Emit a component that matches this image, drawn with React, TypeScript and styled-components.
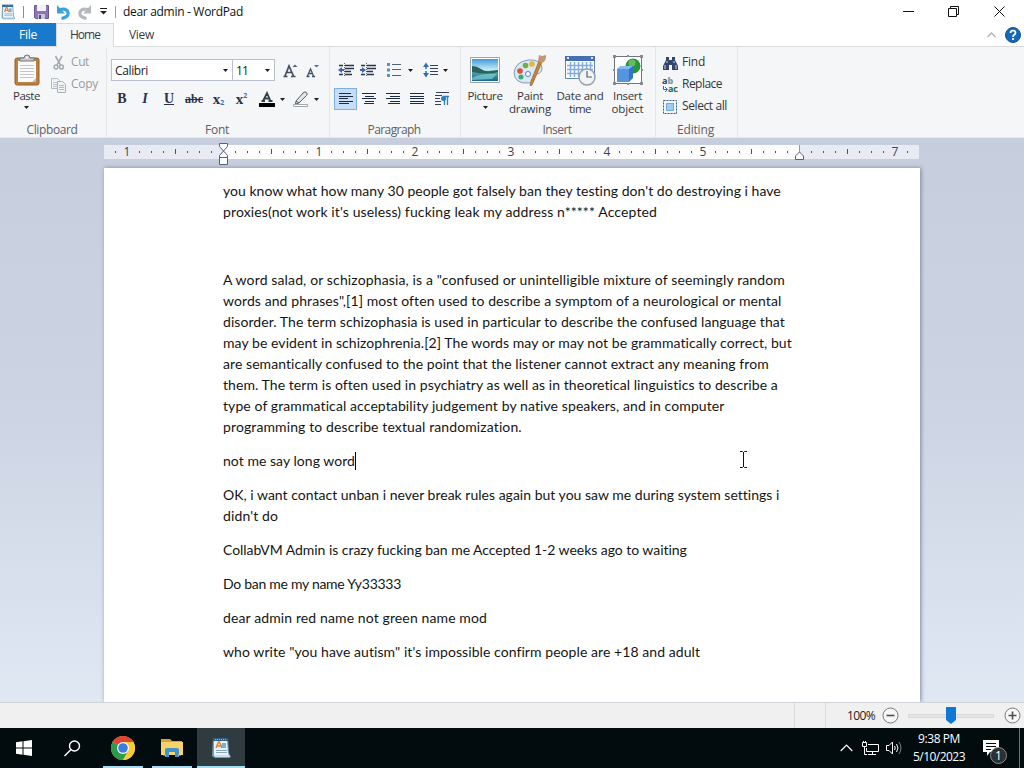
import * as React from 'react';
import styled, { createGlobalStyle } from 'styled-components';

const GlobalStyle = createGlobalStyle`
  * { box-sizing: border-box; }
  body {
    margin: 0;
    overflow: hidden;
    font-family: "Open Sans", "Noto Sans", sans-serif;
    font-size: 12px;
  }
  svg { display: block; flex: none; }
`;

const Window = styled.div`
  width: 1024px;
  height: 768px;
  display: flex;
  flex-direction: column;
  background: #fff;
  overflow: hidden;
`;

const FitSpan = styled.span`
  display: inline-block;
  white-space: pre;
  flex: none;
`;

interface FitProps {
  w: number;
  children: string;
}

// spreads the letters so that the text takes exactly w pixels
function Fit({ w, children }: FitProps) {
  const ref = React.useRef<HTMLSpanElement>(null);
  const [spacing, setSpacing] = React.useState(0);
  React.useLayoutEffect(() => {
    if (ref.current) {
      setSpacing((w - ref.current.getBoundingClientRect().width) / children.length);
    }
  }, []);
  return <FitSpan ref={ref} style={{ letterSpacing: spacing }}>{children}</FitSpan>;
}

/* title bar */

const TitleBar = styled.header`
  height: 23px;
  flex: none;
  display: flex;
  align-items: center;
  color: #111;
`;

const Slot = styled.div<{ w: number; h?: number }>`
  width: ${p => p.w}px;
  height: ${p => (p.h ? p.h + 'px' : 'auto')};
  flex: none;
  display: flex;
  align-items: center;
  justify-content: center;
`;

const Spacer = styled.div`
  flex: 1;
`;

/* tabs */

const Tabs = styled.nav`
  height: 24px;
  flex: none;
  display: flex;
  border-bottom: 1px solid #dadbdc;
`;

const Tab = styled.div<{ w: number; kind?: 'file' | 'active' }>`
  width: ${p => p.w}px;
  height: ${p => (p.kind === 'active' ? 24 : 23)}px;
  display: flex;
  align-items: center;
  justify-content: center;
  padding-bottom: ${p => (p.kind === 'active' ? 2 : 0)}px;
  color: ${p => (p.kind === 'file' ? '#fff' : '#3c3c46')};
  background: ${p => (p.kind === 'file' ? '#1979ca' : p.kind === 'active' ? '#f5f6f7' : 'none')};
  border: ${p => (p.kind === 'active' ? '1px solid #dadbdc' : 'none')};
  border-bottom: none;
`;

/* ribbon */

const Ribbon = styled.div`
  height: 91px;
  flex: none;
  display: flex;
  background: #f5f6f7;
  border-bottom: 1px solid #dfe8f4;
`;

const Group = styled.section<{ w: number }>`
  width: ${p => p.w}px;
  height: 90px;
  padding-top: 5px;
  display: flex;
  flex-direction: column;
  position: relative;
  border-right: 1px solid #e4e6ea;
`;

const GroupBody = styled.div<{ left?: number }>`
  height: 70px;
  padding-left: ${p => p.left || 0}px;
  display: flex;
`;

const Caption = styled.div`
  height: 15px;
  line-height: 15px;
  text-align: center;
  padding-right: 2px;
  color: #5d6068;
`;

const Rows = styled.div<{ top?: number }>`
  display: flex;
  flex-direction: column;
  padding-top: ${p => p.top || 0}px;
`;

const Row = styled.div<{ h: number }>`
  height: ${p => p.h}px;
  display: flex;
  align-items: center;
`;

const BigButton = styled.div<{ w: number }>`
  width: ${p => p.w}px;
  display: flex;
  flex-direction: column;
  align-items: center;
  color: #33363e;
  font-size: 11.5px;
  line-height: 13px;
`;

const BigIcon = styled.div`
  height: 37px;
  padding-bottom: 1px;
  display: flex;
  align-items: center;
`;

const SmallLabel = styled.span<{ off?: boolean }>`
  color: ${p => (p.off ? '#9a9ca0' : '#33363e')};
  padding: 0 0 2px 2px;
  line-height: 18px;
`;

const Combo = styled.div<{ w: number }>`
  width: ${p => p.w}px;
  height: 22px;
  margin-right: -1px;
  padding: 0 4px 0 3px;
  display: flex;
  align-items: center;
  justify-content: space-between;
  background: #fff;
  border: 1px solid #b9bfce;
  color: #222;
`;

const Glyph = styled.span<{ size: number; italic?: boolean; line?: string }>`
  font-family: "Liberation Serif", serif;
  font-size: ${p => p.size}px;
  font-weight: 700;
  font-style: ${p => (p.italic ? 'italic' : 'normal')};
  text-decoration: ${p => p.line || 'none'};
  color: #28324a;
  line-height: 16px;
`;

const Script = styled.span<{ up?: boolean }>`
  font-size: 7px;
  font-weight: 700;
  color: #3572b8;
  line-height: 8px;
  margin-top: ${p => (p.up ? -7 : 8)}px;
`;

const Pressed = styled.div`
  width: 23px;
  height: 22px;
  display: flex;
  align-items: center;
  justify-content: center;
  background: #c6def5;
  border: 1px solid #7fb0df;
`;

/* work area */

const Workspace = styled.main`
  height: 564px;
  flex: none;
  display: flex;
  flex-direction: column;
  padding-left: 104px;
  padding-top: 7px;
  background: linear-gradient(#c6cddd, #cdd5e4 50%, #dfe8f3);
  overflow: hidden;
`;

const Ruler = styled.div`
  width: 815px;
  height: 14px;
  flex: none;
  margin-bottom: 9px;
  padding-left: 5px;
  display: flex;
  position: relative;
  background: linear-gradient(90deg, #e8ebf4 119px, #fdfdfe 119px, #fdfdfe 695px, #e8ebf4 695px);
`;

const Tick = styled.div<{ kind: 'dot' | 'half' | 'num' | 'none' }>`
  width: 12px;
  height: 13px;
  flex: none;
  display: flex;
  align-items: center;
  justify-content: center;
  color: #3e4356;
  &::after {
    content: '';
    display: ${p => (p.kind === 'dot' || p.kind === 'half' ? 'block' : 'none')};
    width: 1px;
    height: ${p => (p.kind === 'half' ? 5 : 2)}px;
    background: #4c5060;
  }
`;

const Marker = styled.div<{ x: number; y: number }>`
  position: absolute;
  left: ${p => p.x}px;
  top: ${p => p.y}px;
`;

const Page = styled.article`
  width: 816px;
  height: 534px;
  flex: none;
  padding: 12px 0 0 119px;
  background: #fff;
  box-shadow: 1px 0 4px #7e8798;
  color: #151515;
  font-family: Lato, Carlito, sans-serif;
  font-size: 14px;
`;

const Paragraph = styled.div`
  min-height: 21px;
  margin-bottom: 13px;
`;

const Line = styled.div`
  height: 21px;
  line-height: 21px;
  display: flex;
`;

const Caret = styled.i`
  width: 1px;
  height: 18px;
  margin-top: 2px;
  background: #000;
`;

const MousePointer = styled.div`
  position: absolute;
  left: 739px;
  top: 451px;
`;

/* status bar */

const StatusBar = styled.footer`
  height: 26px;
  flex: none;
  display: flex;
  align-items: center;
  background: #f0f0f0;
  border-top: 1px solid #cfd2d6;
  color: #222;
`;

const StatusCell = styled.div<{ w: number }>`
  width: ${p => p.w}px;
  height: 25px;
  border-right: 1px solid #dcdcdc;
`;

const ZoomTrack = styled.div`
  width: 86px;
  height: 4px;
  margin: 0 10px 0 9px;
  display: flex;
  align-items: center;
  justify-content: center;
  background: #e4e5e6;
  border: 1px solid #d8d9da;
`;

/* taskbar */

const Taskbar = styled.div`
  height: 40px;
  flex: none;
  display: flex;
  background: #020b0d;
  color: #fff;
`;

const TaskButton = styled.div<{ w: number; active?: boolean; line?: number }>`
  width: ${p => p.w}px;
  height: 40px;
  display: flex;
  align-items: center;
  justify-content: center;
  background-color: ${p => (p.active ? '#303b3f' : 'transparent')};
  background-image: ${p => (p.line ? 'linear-gradient(#a3dcf3, #a3dcf3)' : 'none')};
  background-size: ${p => p.line || 0}px 2px;
  background-position: bottom center;
  background-repeat: no-repeat;
`;

const Clock = styled.div`
  width: 66px;
  display: flex;
  flex-direction: column;
  align-items: center;
  padding-top: 2px;
  line-height: 18px;
`;

const ShowDesktop = styled.div`
  width: 5px;
  border-left: 1px solid #6b7375;
`;

const Badge = styled.div`
  position: absolute;
  left: 7px;
  top: 7px;
  width: 17px;
  height: 17px;
  border-radius: 9px;
  border: 1px solid #8a8f90;
  background: #2b3032;
  font-size: 12px;
  line-height: 15px;
  text-align: center;
`;

const Notify = styled.div`
  position: relative;
  width: 18px;
  height: 17px;
`;

/* drawings */

const Arrow = () => (
  <svg width="5" height="3"><path d="M0 0h5L2.500 3z" fill="#1c1c1c" /></svg>
);

const DocIcon = ({ size }: { size: number }) => (
  <svg width={size} height={size} viewBox="0 0 22 22">
    <path d="M3 1h15l1 15 2 4-2 1H5l-3-2z" fill="#6f9fbd" />
    <path d="M3 1h15v3H3z" fill="#315f86" />
    <path d="M4 4h13l1 12 1 3H4z" fill="#e9f3fa" />
    <path d="M5 2.500h11" stroke="#7dbde4" strokeDasharray="1 1" />
    <path d="M6 11l2.500-6h1l2.500 6M7 9h4" fill="none" stroke="#e1803c" strokeWidth="1.500" />
    <path d="M12 6h4v5h-4z" fill="#78b1d8" />
    <path d="M6 13.500h11M6 15.500h11" stroke="#8da8bd" />
    <path d="M4 18h15l1 2H5z" fill="#c8e0ef" />
  </svg>
);

const SaveIcon = () => (
  <svg width="15" height="15" viewBox="0 0 15 15">
    <path d="M.500 1.500h14v13H2l-1.500-1z" fill="#8d74b5" stroke="#6a5795" />
    <path d="M3 1h9v6H3z" fill="#f3f1f8" />
    <path d="M4 10h7v5H4z" fill="#c9c3dd" />
    <path d="M5 11h2v4H5z" fill="#514374" />
  </svg>
);

const UndoIcon = ({ redo }: { redo?: boolean }) => (
  <svg width="15" height="16" viewBox="0 0 15 16">
    <g transform={redo ? 'matrix(-1 0 0 1 15 0)' : undefined}>
      <path
        d="M5.500 14.500q7.500-1.500 6.500-6Q11 4 4 5.500"
        fill="none"
        stroke={redo ? '#b5b9be' : '#3ba3da'}
        strokeWidth="3.200"
      />
      <path d="M1 1v8.500h8z" fill={redo ? '#b5b9be' : '#3ba3da'} />
    </g>
  </svg>
);

const PasteIcon = () => (
  <svg width="26" height="32" viewBox="0 0 26 32">
    <rect x="1" y="4" width="24" height="27" rx="2" fill="#b98142" stroke="#936330" />
    <path d="M4 7h18v21H4z" fill="#fbfbfb" />
    <path d="M6 11.500h14M6 14.500h14M6 17.500h14M6 20.500h14M6 23.500h14" stroke="#c2c6cc" />
    <path d="M18 28l4-4v4z" fill="#b9bec8" />
    <path d="M6 7V4h4q0-3 3-3t3 3h4v3z" fill="#c7cacc" stroke="#74787c" />
    <circle cx="13" cy="3.500" r="1" fill="#fff" />
  </svg>
);

const CutIcon = () => (
  <svg width="12" height="16" viewBox="0 0 12 16">
    <path d="M2.500 1l5 9M9 1L4 10" stroke="#a5abb3" strokeWidth="1.600" />
    <circle cx="3" cy="12" r="1.900" fill="none" stroke="#a5abb3" strokeWidth="1.500" />
    <circle cx="8.500" cy="12" r="1.900" fill="none" stroke="#a5abb3" strokeWidth="1.500" />
  </svg>
);

const CopyIcon = () => (
  <svg width="16" height="16" viewBox="0 0 16 16">
    <path d="M.500 1.500h6l2 2v8h-8z" fill="#f3f4f6" stroke="#b4bac3" />
    <path d="M2 5.500h4M2 7.500h4M2 9.500h4" stroke="#bcc3cd" />
    <path d="M6.500 4.500h5l3 3v8h-8z" fill="#f3f4f6" stroke="#a8afb9" />
    <path d="M8 8.500h5M8 10.500h5M8 12.500h5" stroke="#b0b8c4" />
  </svg>
);

const GrowIcon = ({ down }: { down?: boolean }) => (
  <svg width="15" height="15" viewBox="0 0 15 15">
    {down ? (
      <>
        <path d="M2.500 13l3-7 3 7M3.500 10.500h4M1.500 13.500h3M7 13.500h3" fill="none" stroke="#42556b" strokeWidth="1.300" />
        <path d="M9 2h5l-2.500 2.500z" fill="#3e70c0" />
      </>
    ) : (
      <>
        <path d="M2 13L6 3l4.500 10M3.500 9.500h5.500M.500 13.500h4M8 13.500h4.500" fill="none" stroke="#42505f" strokeWidth="1.700" />
        <path d="M9.500 4h5L12 1.500z" fill="#52617a" />
      </>
    )}
  </svg>
);

const PenIcon = () => (
  <svg width="17" height="17" viewBox="0 0 17 17">
    <path d="M4 10l7-8q2-2 3.500-.500t0 3L7 12l-3.500 1z" fill="#e3e5e7" stroke="#59606a" />
    <path d="M4 10l3 2" stroke="#59606a" />
    <path d="M1.500 13.500h14v2h-14z" fill="#fff" stroke="#a4a8ad" />
  </svg>
);

const FontColorIcon = () => (
  <svg width="16" height="16" viewBox="0 0 16 16">
    <path d="M4 10l4-8 3.500 8M5 7.500h5.500M2.500 10h3.500M9.500 10h4" fill="none" stroke="#35414f" strokeWidth="1.800" />
    <path d="M0 12h16v4H0z" fill="#000" />
  </svg>
);

const IndentIcon = ({ out }: { out?: boolean }) => (
  <svg width="16" height="14" viewBox="0 0 16 14">
    <path d="M1 2.500h4M7 2.500h9M7 5.500h9M7 8.500h6M1 11.500h4M7 11.500h7" stroke="#27364c" strokeWidth="1.500" />
    <path d="M6.500 0v14" stroke="#50607a" strokeDasharray="1 1" />
    <path d={out ? 'M0 7l4-3v2h2v2H4v2z' : 'M6 7L2 4v2H0v2h2v2z'} fill="#3d62b8" />
  </svg>
);

const BulletsIcon = () => (
  <svg width="15" height="14" viewBox="0 0 15 14">
    <path d="M0 0h3v3H0zM0 5.500h3v3H0zM0 11h3v3H0z" fill="#5c8fca" />
    <path d="M5 1.500h9M5 6.500h9M5 12.500h9" stroke="#52627c" />
  </svg>
);

const SpacingIcon = () => (
  <svg width="16" height="16" viewBox="0 0 16 16">
    <path d="M0 5l3-4.500L6 5zM0 11l3 4.500L6 11z" fill="#2f6fb5" />
    <path d="M3 4v3M3 9v3" stroke="#2f6fb5" strokeWidth="1.500" />
    <path d="M7 3.500h8M7 6.500h8M7 9.500h8M7 12.500h8" stroke="#33415a" />
  </svg>
);

const alignPaths = {
  left: 'M0 .500h12M0 3.500h14M0 5.500h9M0 8.500h14M0 10.500h10',
  center: 'M0 .500h14M3 3.500h9M0 5.500h14M3 8.500h9M2 10.500h10',
  right: 'M0 .500h14M4 3.500h10M0 5.500h14M4 8.500h10M2 10.500h12',
  justify: 'M0 .500h14M0 3.500h14M0 5.500h14M0 8.500h14M0 10.500h14',
};

const AlignIcon = ({ kind }: { kind: keyof typeof alignPaths }) => (
  <svg width="14" height="12"><path d={alignPaths[kind]} stroke="#1f2b44" /></svg>
);

const PilcrowIcon = () => (
  <svg width="14" height="14" viewBox="0 0 14 14">
    <path d="M1 .500h13M0 3.500h7M0 6.500h5M0 9.500h6M0 12.500h6" stroke="#33415a" />
    <path d="M8 4.500h6M9.500 13V4M12.500 13V4" stroke="#2a7fc0" strokeWidth="1.300" />
    <circle cx="8.500" cy="6.500" r="2.500" fill="#2a7fc0" />
  </svg>
);

const PictureIcon = () => (
  <svg width="30" height="26" viewBox="0 0 30 26">
    <defs>
      <linearGradient id="sky" x2="0" y2="1">
        <stop offset="0" stopColor="#3f9bdc" />
        <stop offset=".5" stopColor="#c9ecf5" />
        <stop offset=".6" stopColor="#49a3ac" />
        <stop offset="1" stopColor="#1d6790" />
      </linearGradient>
    </defs>
    <path d="M.500.500h29v25H.500z" fill="#fff" stroke="#9aa5b0" />
    <path d="M2 2h26v22H2z" fill="url(#sky)" />
    <path d="M2 9q5 0 9 3t9 2l8-1v2q-10 3-26 0z" fill="#286259" />
    <path d="M2 21q10-5 25-4l-5 5-20 1z" fill="#8fdcda" opacity=".6" />
  </svg>
);

const PaintIcon = () => (
  <svg width="34" height="32" viewBox="0 0 34 32">
    <path d="M1 19Q2 8 15 6q13-1 14 8 0 5-5 6-5 1-3 5 0 4-6 4Q2 30 1 19z" fill="#d9e8f4" stroke="#849cb3" />
    <circle cx="7" cy="17" r="2.800" fill="#d5533d" />
    <circle cx="12.500" cy="11.500" r="2.800" fill="#6fb13b" />
    <circle cx="19" cy="10" r="2.800" fill="#e6b733" />
    <circle cx="8" cy="23" r="2.500" fill="#42a374" />
    <circle cx="15" cy="20" r="2.500" fill="#fff" stroke="#4b7fc2" />
    <path d="M29 8L19 31l-2 1 1-5L26 7z" fill="#c8843e" stroke="#99602a" strokeWidth=".7" />
    <path d="M25 7l1-6 3 1 4-1q1 5-4 8z" fill="#bf9874" />
  </svg>
);

const CalendarIcon = () => (
  <svg width="32" height="32" viewBox="0 0 32 32">
    <path d="M1.500 2.500h29v22h-29z" fill="#fff" stroke="#5d86bd" />
    <path d="M1 2h30v5H1z" fill="#456fae" />
    <path d="M4 3v2M28 3v2" stroke="#dbe8f5" strokeWidth="2" />
    <path d="M3 11.500h26M3 15.500h26M3 19.500h26M6.500 8v15M10.500 8v15M14.500 8v15M18.500 8v15M22.500 8v15M26.500 8v15" stroke="#85ace0" strokeWidth="1.500" />
    <circle cx="23" cy="23" r="8" fill="#f1f4f6" stroke="#989fa8" strokeWidth="1.500" />
    <path d="M23 17v6h5" fill="none" stroke="#59616b" strokeWidth="1.200" />
  </svg>
);

const ObjectIcon = () => (
  <svg width="30" height="30" viewBox="0 0 30 30">
    <path d="M1.500 1.500h27v27h-27z" fill="#fff" stroke="#71757b" />
    <path d="M0 0h3v3H0zM27 0h3v3h-3zM0 27h3v3H0zM27 27h3v3h-3zM14 0h2v2h-2zM14 28h2v2h-2zM0 14h2v2H0zM28 14h2v2h-2z" fill="#888c91" />
    <circle cx="20" cy="11" r="7.500" fill="#279638" />
    <circle cx="19" cy="8" r="3.500" fill="#62bd60" />
    <path d="M4 14l4-3h12v12l-4 4H4z" fill="#3275ca" />
    <path d="M4 14h12v13H4z" fill="#5595df" />
    <path d="M4 14l4-3h12l-4 3z" fill="#86baf0" />
  </svg>
);

const FindIcon = () => (
  <svg width="15" height="13" viewBox="0 0 15 13">
    <path d="M3 0h3v3h3V0h3v3l3 6v4H9V8H6v5H0V9l3-6z" fill="#35466d" />
    <path d="M2 8v4M4 4v2M11 4v2M13 8v4" stroke="#c8d4eb" />
  </svg>
);

const SelectIcon = () => (
  <svg width="14" height="14" viewBox="0 0 14 14">
    <path d="M.500.500h13v13H.500z" fill="none" stroke="#315f93" strokeDasharray="2 1" />
    <path d="M3.500 3.500h7v7h-7z" fill="#9dcdf0" stroke="#6fa8d6" />
  </svg>
);

const ReplaceBox = styled.div`
  width: 16px;
  display: flex;
  flex-direction: column;
  font: 700 9px/8px "Open Sans", sans-serif;
  color: #26425f;
  & b { color: #8d98a5; }
  & div:last-child { align-self: flex-end; display: flex; align-items: center; color: #236a52; }
`;

const MinMaxIcon = ({ d }: { d: string }) => (
  <svg width="11" height="11"><path d={d} fill="none" stroke="#111" /></svg>
);

const ZoomButton = ({ plus }: { plus?: boolean }) => (
  <svg width="17" height="17" viewBox="0 0 17 17">
    <circle cx="8.500" cy="8.500" r="7.500" fill="#f7f7f7" stroke="#77797c" />
    <path d={plus ? 'M4.500 8.500h8M8.500 4.500v8' : 'M4.500 8.500h8'} stroke="#4c4e51" strokeWidth="1.600" />
  </svg>
);

const ChromeIcon = () => (
  <svg width="24" height="24" viewBox="0 0 24 24">
    <circle cx="12" cy="12" r="12" fill="#f9cb35" />
    <path d="M12 12L1.600 6A12 12 0 0 1 22.400 6H12z" fill="#df4437" />
    <path d="M1.600 6A12 12 0 0 0 12 24l5.200-9L12 12z" fill="#2d9b4c" />
    <path d="M12 6h10.400A12 12 0 0 1 12 24l5.200-9z" fill="#f9cb35" />
    <circle cx="12" cy="12" r="6" fill="#fff" />
    <circle cx="12" cy="12" r="4.800" fill="#3e7de0" />
  </svg>
);

const FolderIcon = () => (
  <svg width="22" height="20" viewBox="0 0 22 20">
    <path d="M0 1h9l2 2h10v4H0z" fill="#dca232" />
    <path d="M0 4h22v13H0z" fill="#f8d36b" />
    <path d="M4 19v-7q0-2 2-2h10q2 0 2 2v7h-4v-5H8v5z" fill="#3f94cc" />
    <path d="M2 17h3M17 17h3" stroke="#f8d36b" />
  </svg>
);

/* the page text, each line with its set width */
const paragraphs: [string, number][][] = [
  [
    ["you know what how many 30 people got falsely ban they testing don't do destroying i have", 558],
    ["proxies(not work it's useless) fucking leak my address n***** Accepted", 434],
  ],
  [],
  [
    ['A word salad, or schizophasia, is a "confused or unintelligible mixture of seemingly random', 562],
    ['words and phrases",[1] most often used to describe a symptom of a neurological or mental', 558],
    ['disorder. The term schizophasia is used in particular to describe the confused language that', 562],
    ['may be evident in schizophrenia.[2] The words may or may not be grammatically correct, but', 569],
    ['are semantically confused to the point that the listener cannot extract any meaning from', 546],
    ['them. The term is often used in psychiatry as well as in theoretical linguistics to describe a', 555],
    ['type of grammatical acceptability judgement by native speakers, and in computer', 502],
    ['programming to describe textual randomization.', 299],
  ],
  [['not me say long word', 132]],
  [
    ['OK, i want contact unban i never break rules again but you saw me during system settings i', 556],
    ["didn't do", 55],
  ],
  [['CollabVM Admin is crazy fucking ban me Accepted 1-2 weeks ago to waiting', 464]],
  [['Do ban me my name Yy33333', 178]],
  [['dear admin red name not green name mod', 264]],
  [['who write "you have autism" it\'s impossible confirm people are +18 and adult', 477]],
];

// eighths of an inch, the first one nine steps left of the margin
const ticks = Array.from({ length: 67 }, (_, i) => i - 9);

function tickFor(n: number) {
  if (n === 0 || n === 48) {
    return <Tick key={n} kind="none" />;
  }
  if (n % 8 === 0) {
    return <Tick key={n} kind="num">{Math.abs(n / 8)}</Tick>;
  }
  return <Tick key={n} kind={n % 4 === 0 ? 'half' : 'dot'} />;
}

function RibbonBar() {
  return (
    <Ribbon>
      <Group w={107}>
        <GroupBody left={6}>
          <BigButton w={41}>
            <BigIcon><PasteIcon /></BigIcon>
            <Fit w={27}>Paste</Fit>
            <Slot w={10} h={11}><Arrow /></Slot>
          </BigButton>
          <Slot w={1} />
          <Rows>
            <Row h={22}><Slot w={21}><CutIcon /></Slot><SmallLabel off><Fit w={18}>Cut</Fit></SmallLabel></Row>
            <Row h={22}><Slot w={21}><CopyIcon /></Slot><SmallLabel off><Fit w={27}>Copy</Fit></SmallLabel></Row>
          </Rows>
        </GroupBody>
        <Caption><Fit w={51}>Clipboard</Fit></Caption>
      </Group>
      <Group w={223}>
        <GroupBody left={4}>
          <Rows top={6}>
            <Row h={24}>
              <Combo w={122}><Fit w={33}>Calibri</Fit><Arrow /></Combo>
              <Combo w={43}><Fit w={12}>11</Fit><Arrow /></Combo>
              <Slot w={32}><GrowIcon /></Slot>
              <Slot w={12}><GrowIcon down /></Slot>
            </Row>
            <Row h={34}>
              <Slot w={22}><Glyph size={14}>B</Glyph></Slot>
              <Slot w={24}><Glyph size={14} italic>I</Glyph></Slot>
              <Slot w={24}><Glyph size={14} line="underline">U</Glyph></Slot>
              <Slot w={26}><Glyph size={12} line="line-through">abc</Glyph></Slot>
              <Slot w={23}><Glyph size={15}>x</Glyph><Script>2</Script></Slot>
              <Slot w={23}><Glyph size={15}>x</Glyph><Script up>2</Script></Slot>
              <Slot w={28}><FontColorIcon /></Slot>
              <Slot w={3}><Arrow /></Slot>
              <Slot w={32}><PenIcon /></Slot>
              <Slot w={0}><Arrow /></Slot>
            </Row>
          </Rows>
        </GroupBody>
        <Caption><Fit w={24}>Font</Fit></Caption>
      </Group>
      <Group w={131}>
        <GroupBody left={4}>
          <Rows top={6}>
            <Row h={24}>
              <Slot w={24}><IndentIcon out /></Slot>
              <Slot w={20}><IndentIcon /></Slot>
              <Slot w={32}><BulletsIcon /></Slot>
              <Slot w={0}><Arrow /></Slot>
              <Slot w={9} />
              <Slot w={24}><SpacingIcon /></Slot>
              <Arrow />
            </Row>
            <Row h={34}>
              <Pressed><AlignIcon kind="left" /></Pressed>
              <Slot w={24}><AlignIcon kind="center" /></Slot>
              <Slot w={24}><AlignIcon kind="right" /></Slot>
              <Slot w={23}><AlignIcon kind="justify" /></Slot>
              <Slot w={27}><PilcrowIcon /></Slot>
            </Row>
          </Rows>
        </GroupBody>
        <Caption><Fit w={53}>Paragraph</Fit></Caption>
      </Group>
      <Group w={195}>
        <GroupBody left={2}>
          <BigButton w={44}>
            <BigIcon><PictureIcon /></BigIcon>
            <Fit w={35}>Picture</Fit>
            <Slot w={10} h={11}><Arrow /></Slot>
          </BigButton>
          <BigButton w={46}>
            <BigIcon><PaintIcon /></BigIcon>
            <Fit w={26}>Paint</Fit>
            <Fit w={42}>drawing</Fit>
          </BigButton>
          <BigButton w={54}>
            <BigIcon><CalendarIcon /></BigIcon>
            <Fit w={47}>Date and</Fit>
            <Fit w={22}>time</Fit>
          </BigButton>
          <BigButton w={41}>
            <BigIcon><ObjectIcon /></BigIcon>
            <Fit w={29}>Insert</Fit>
            <Fit w={32}>object</Fit>
          </BigButton>
        </GroupBody>
        <Caption><Fit w={29}>Insert</Fit></Caption>
      </Group>
      <Group w={82}>
        <GroupBody left={4}>
          <Rows>
            <Row h={22}><Slot w={20}><FindIcon /></Slot><SmallLabel><Fit w={23}>Find</Fit></SmallLabel></Row>
            <Row h={22}>
              <Slot w={20}>
                <ReplaceBox>
                  <div>a<b>b</b></div>
                  <div><svg width="5" height="6"><path d="M.500 0v3.500H4M2 1l2.500 2.500L2 6" fill="none" stroke="#2b70b5" /></svg>ac</div>
                </ReplaceBox>
              </Slot>
              <SmallLabel><Fit w={40}>Replace</Fit></SmallLabel>
            </Row>
            <Row h={22}><Slot w={20}><SelectIcon /></Slot><SmallLabel><Fit w={45}>Select all</Fit></SmallLabel></Row>
          </Rows>
        </GroupBody>
        <Caption><Fit w={37}>Editing</Fit></Caption>
      </Group>
    </Ribbon>
  );
}

function Document() {
  return (
    <Page>
      {paragraphs.map((lines, i) => (
        <Paragraph key={i}>
          {lines.map(([text, w]) => (
            <Line key={text}><Fit w={w}>{text}</Fit>{i === 3 && <Caret />}</Line>
          ))}
        </Paragraph>
      ))}
    </Page>
  );
}

export default function App() {
  return (
    <Window>
      <GlobalStyle />
      <TitleBar>
        <Slot w={16}><DocIcon size={16} /></Slot>
        <Slot w={14}><svg width="1" height="12"><path d="M.500 0v12" stroke="#8c8c8c" /></svg></Slot>
        <Slot w={22}><SaveIcon /></Slot>
        <Slot w={23}><UndoIcon /></Slot>
        <Slot w={19}><UndoIcon redo /></Slot>
        <Slot w={19}><svg width="7" height="7"><path d="M0 3h7L3.500 6.500z" fill="#222" /><path d="M0 .500h7" stroke="#222" /></svg></Slot>
        <Slot w={5}><svg width="1" height="12"><path d="M.500 0v12" stroke="#a0a0a0" /></svg></Slot>
        <Slot w={5} />
        <Fit w={120}>dear admin - WordPad</Fit>
        <Spacer />
        <Slot w={46}><MinMaxIcon d="M0 5.500h11" /></Slot>
        <Slot w={44}><MinMaxIcon d="M.500 2.500h8v8h-8zM2.500 2V.500h8v8H9" /></Slot>
        <Slot w={48}><MinMaxIcon d="M.500.500l10 10M10.500.500l-10 10" /></Slot>
        <Slot w={1} />
      </TitleBar>
      <Tabs>
        <Tab w={56} kind="file"><Fit w={18}>File</Fit></Tab>
        <Tab w={58} kind="active"><Fit w={30}>Home</Fit></Tab>
        <Tab w={55}><Fit w={25}>View</Fit></Tab>
        <Spacer />
        <Slot w={22}><svg width="9" height="6"><path d="M.500 5l4-4 4 4" fill="none" stroke="#b3b6ba" strokeWidth="1.500" /></svg></Slot>
        <Slot w={22}>
          <svg width="16" height="16" viewBox="0 0 16 16">
            <circle cx="8" cy="8" r="7.500" fill="#1769b8" stroke="#0f549b" />
            <path d="M5.500 6q0-2.500 2.500-2.500T10.500 6q0 1-1.500 2-1 .5-1 2M8 11v2" fill="none" stroke="#fff" strokeWidth="1.700" />
          </svg>
        </Slot>
      </Tabs>
      <RibbonBar />
      <Workspace>
        <Ruler>
          {ticks.map(tickFor)}
          <Marker x={115} y={-2}>
            <svg width="9" height="23" viewBox="0 0 9 23">
              <path d="M.500.500h8v3l-4 4.500-4-4.500zM4.500 8l4 4.500v9h-8v-9zM.500 14.500h8" fill="#fff" stroke="#59617a" />
            </svg>
          </Marker>
          <Marker x={691} y={0}>
            <svg width="9" height="15" viewBox="0 0 9 15">
              <path d="M4.500 0v7" stroke="#9297a5" />
              <path d="M.500 14.500v-3.500l4-4 4 4v3.500z" fill="#fff" stroke="#59617a" />
            </svg>
          </Marker>
        </Ruler>
        <Document />
        <MousePointer>
          <svg width="9" height="17"><path d="M1 .500h2.500l1 1 1-1H8M1 16.500h2.500l1-1 1 1H8M4.500 1v15" fill="none" stroke="#111" /></svg>
        </MousePointer>
      </Workspace>
      <StatusBar>
        <StatusCell w={795} />
        <StatusCell w={31} />
        <Slot w={21} />
        <Fit w={28}>100%</Fit>
        <Slot w={7} />
        <ZoomButton />
        <ZoomTrack>
          <svg width="10" height="17"><path d="M0 0h10v13l-5 4-5-4z" fill="#0f78d4" /></svg>
        </ZoomTrack>
        <ZoomButton plus />
      </StatusBar>
      <Taskbar>
        <TaskButton w={48}>
          <svg width="16" height="16"><path d="M0 2.200l6.500-.9v6.200H0zM7.500 1.200L16 0v7.500H7.500zM0 8.500h6.500v6.200L0 13.800zM7.500 8.500H16V16l-8.500-1.200z" fill="#fff" /></svg>
        </TaskButton>
        <TaskButton w={49}>
          <svg width="17" height="17"><circle cx="10.500" cy="6" r="5" fill="none" stroke="#fff" strokeWidth="1.400" /><path d="M7 9.500L.500 16" stroke="#fff" strokeWidth="1.500" /></svg>
        </TaskButton>
        <TaskButton w={51} line={40}><ChromeIcon /></TaskButton>
        <TaskButton w={48} line={40}><FolderIcon /></TaskButton>
        <Slot w={1} />
        <TaskButton w={48} active line={48}><DocIcon size={22} /></TaskButton>
        <Spacer />
        <Slot w={24}><svg width="13" height="8"><path d="M.7 7l5.800-5.800L12.300 7" fill="none" stroke="#fff" strokeWidth="1.200" /></svg></Slot>
        <Slot w={24}>
          <svg width="17" height="15" viewBox="0 0 17 15"><path d="M6 3.500h10.500v7H4.500V7M10.500 11v3M6 13.500h8M.500 1.500h4v4h-4zM2.500 6v7.500H5M1.500 0v2M3.500 0v2" fill="none" stroke="#fff" /></svg>
        </Slot>
        <Slot w={24}>
          <svg width="17" height="14" viewBox="0 0 17 14">
            <path d="M.500 4.500H3L6.500 1v12L3 9.500H.500zM8.500 5q1.500 2 0 4M10.500 3q3 4 0 8" fill="none" stroke="#fff" />
            <path d="M13 1q4 6 0 12" fill="none" stroke="#777d7f" />
          </svg>
        </Slot>
        <Clock>
          <Fit w={42}>9:38 PM</Fit>
          <Fit w={52}>5/10/2023</Fit>
        </Clock>
        <Slot w={40}>
          <Notify>
            <svg width="16" height="16"><path d="M0 0h16v12H7l-3 4v-4H0z" fill="#fff" /><path d="M3 3.500h10M3 6.500h10M3 9.500h5" stroke="#020b0d" /></svg>
            <Badge>1</Badge>
          </Notify>
        </Slot>
        <Slot w={7} />
        <ShowDesktop />
      </Taskbar>
    </Window>
  );
}
